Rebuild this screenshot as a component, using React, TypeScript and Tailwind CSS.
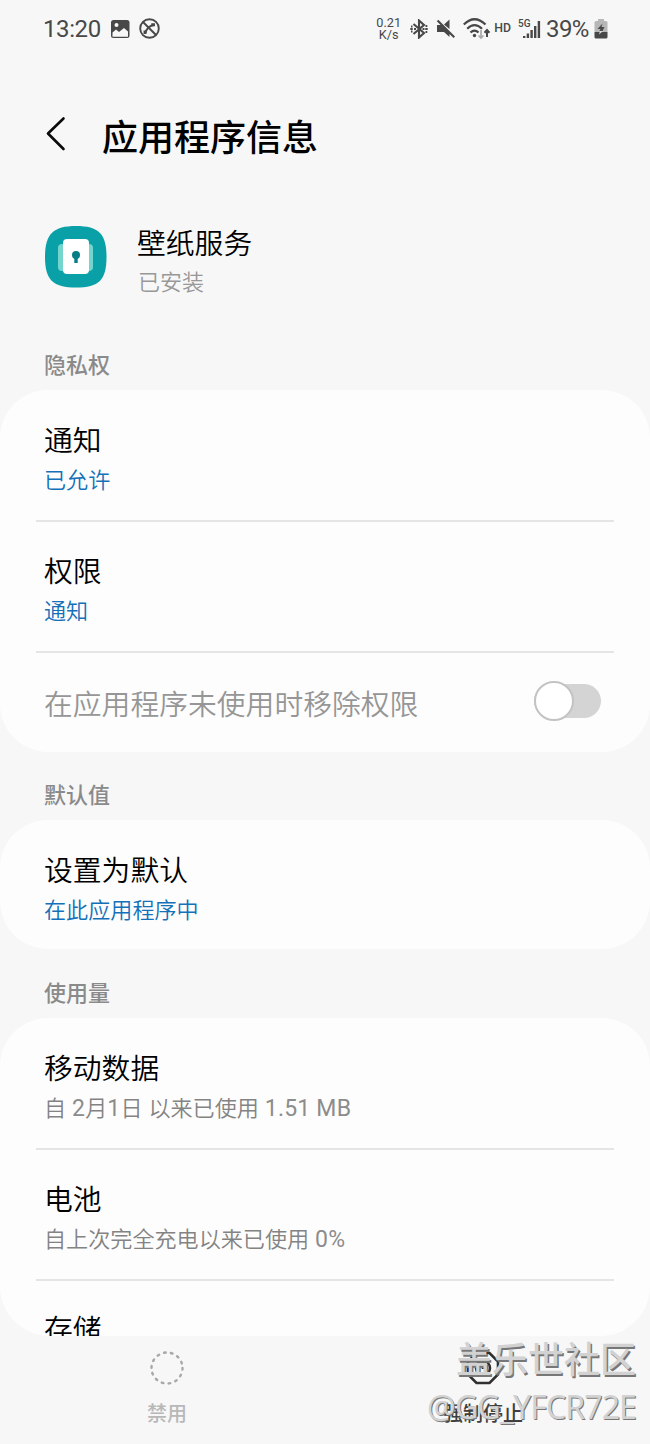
import React from 'react';

function Row({ title, sub, tone = 'gray', divider = false }: { title: string; sub: React.ReactNode; tone?: 'gray' | 'blue'; divider?: boolean }) {
  return (
    <div className="relative h-[130.5px] px-[44px] pt-[31px]">
      <div className="h-10 text-[28.8px] leading-10 text-black">{title}</div>
      <div className={`mt-[4px] h-[30px] text-[22.1px] leading-[30px] ${tone === 'blue' ? 'text-[#1470b8]' : 'text-[#838383]'}`}>{sub}</div>
      {divider && <div className="absolute -bottom-[1.5px] left-9 right-9 h-[2px] bg-[#e5e5e5]" />}
    </div>
  );
}

function Section({ label }: { label: string }) {
  return <h2 className="h-[30px] pl-[44px] pt-px text-[22px] font-medium leading-[30px] text-[#8a8a8a]">{label}</h2>;
}

function Latin({ children }: { children: React.ReactNode }) {
  return <span className="text-[23px] font-normal leading-none tracking-[0.2px] text-[#8c8c8c]">{children}</span>;
}

function StatusBar() {
  return (
    <div className="flex h-[57px] items-center pl-[43px] pr-[42px] text-[#484848]">
      <span className="w-[67px] text-[24px] font-normal leading-none tracking-[-0.4px]">13:20</span>
      <svg className="h-5 w-5" viewBox="0 0 20 20">
        <rect x="1" y="1" width="18.500" height="18" rx="2.5" fill="#484848" />
        <circle cx="6.500" cy="6" r="2" fill="#f7f7f7" />
        <path d="M2.500 13.500 6 10.500l3 2.500 5-4 4 3.500v4.700q0 .500-.500.500H3q-.500 0-.500-.500z" fill="#f7f7f7" />
      </svg>
      <svg className="ml-[9px] h-[21px] w-[21px]" viewBox="0 0 21 21" fill="none" stroke="#484848">
        <circle cx="10.5" cy="10.5" r="9.3" strokeWidth="1.9" />
        <path d="M4 4 17 17" strokeWidth="2" />
        <path d="M6.500 15Q7 12 9.500 9.500Q12 7.200 15 7" strokeWidth="1.900" />
        <path d="M6 12.500v3.500M12.300 6.800h3.700" strokeWidth="2.900" />
      </svg>
      <div className="ml-auto flex items-center">
        <div className="w-[27px] text-center text-[12.7px] font-normal leading-[11.5px]">0.21<br />K/s</div>
        <svg className="ml-[8px] h-5 w-[18px]" viewBox="0 0 18 20" fill="none" stroke="#484848" strokeWidth="2.1">
          <path d="m3.500 5 10.500 9-5 4.500v-17L14 6 3.500 15" />
          <path d="M4 10H6M12.500 10h2" />
          <path d="M.3 10h2.400M15.300 10h2.400M15.500 7h1.800M15.500 13h1.800M1 7.500h1.500M1 12.500h1.500" strokeWidth="1.800" />
        </svg>
        <svg className="ml-[8px] h-5 w-5" viewBox="0 0 20 20" fill="#484848">
          <path d="M1 6h4.500l8 8v4l-5.500-5H1zM8 5.500l5.500-5v9.500zM2.300.700l16.700 16.700-1.500 1.500L.800 2.200z" />
        </svg>
        <svg className="ml-[7px] h-[22px] w-[28px]" viewBox="0 0 28 22" fill="none" stroke="#484848" strokeWidth="2.200">
          <path d="M.800 6.500Q11.500-4 22.500 6.500M4.200 10.700Q11.500 3.500 19 10.700M7.500 14.500Q11.500 10.500 15.500 14.500" />
          <circle cx="11.500" cy="17.500" r="1.700" fill="#484848" stroke="none" />
          <path d="M18 12v8m-2.500-2.500L18 20l2.500-2.500" stroke="#aaa" strokeWidth="1.700" />
          <path d="M24 19v-7m-2.500 2.700L24 12l2.500 2.700" strokeWidth="2" />
        </svg>
        <span className="ml-[3px] text-[12.3px] font-medium leading-none">HD</span>
        <svg className="ml-[7px] h-[22px] w-[24px]" viewBox="0 0 24 22">
          <text x="0" y="9" className="font-['Roboto'] text-[10px] font-medium" fill="#484848">5G</text>
          <g fill="#484848">
            <rect x="5" y="18" width="2.400" height="2" />
            <rect x="8.700" y="15.500" width="2.400" height="4.500" />
            <rect x="12.400" y="12" width="2.400" height="8" />
            <rect x="16" y="8" width="2.400" height="12" />
            <rect x="19.700" y="3" width="2.400" height="17" />
          </g>
        </svg>
        <span className="ml-[4px] w-[46px] whitespace-nowrap text-[24px] font-normal leading-none tracking-[-0.600px]">39%</span>
        <svg className="ml-[2px] h-5 w-[14px]" viewBox="0 0 14 20">
          <path d="M4 0h6v2h2q1.500 0 1.500 1.500V13H.500V3.500Q.500 2 2 2h2z" fill="#b7b7b7" />
          <path d="M.500 13h13v5q0 1.500-1.500 1.500H2Q.500 19.500.500 18z" fill="#484848" />
          <path d="m8.500 4.500-5 5.500h3l-1 2h3l2-4h-3z" fill="#484848" />
          <path d="m6 12-1 3.500L9 12z" fill="#ddd" />
        </svg>
      </div>
    </div>
  );
}

export default function App() {
  return (
    <div className="relative flex h-[1444px] w-[650px] flex-col overflow-hidden bg-[#f7f7f7] font-['Roboto','Noto_Sans_CJK_SC',sans-serif] font-[350]">
      <StatusBar />
      <header className="flex h-[158px] items-center">
        <svg className="-mt-[4px] ml-[45px] h-9 w-[22px]" viewBox="0 0 22 36" fill="none" stroke="#0a0a0a" strokeWidth="2.600" strokeLinecap="round" strokeLinejoin="round">
          <path d="M18.500 2.500 3 17.500l15.500 15.500" />
        </svg>
        <h1 className="ml-[35px] mt-[5px] text-[36px] font-medium leading-[48px] text-black">应用程序信息</h1>
      </header>
      <div className="flex h-[135px] pl-[45px] pt-[11px]">
        <svg className="h-[62px] w-[62px]" viewBox="0 0 62 62">
          <path d="M31 0C54 0 61.500 8 61.500 31S54 61.500 31 61.500 0 54 0 31 8 0 31 0Z" fill="#09a1a7" />
          <rect x="13" y="18" width="35" height="27" rx="4" fill="#73d5cd" />
          <rect x="18" y="13" width="26" height="35" rx="4" fill="#fff" />
          <circle cx="31" cy="29" r="4" fill="#087d86" />
          <path d="M29.300 29h3.400v8h-3.400z" fill="#087d86" />
        </svg>
        <div className="ml-[30px] -mt-[2px]">
          <div className="h-10 text-[28.8px] leading-10 text-black">壁纸服务</div>
          <div className="ml-px text-[22px] leading-[38px] text-[#989898]">已安装</div>
        </div>
      </div>
      <main className="h-[986px] overflow-hidden rounded-b-[50px]">
        <Section label="隐私权" />
        <section className="mt-[10px] h-[362px] rounded-[48px] bg-[#fdfdfd]">
          <Row title="通知" sub="已允许" tone="blue" divider />
          <Row title="权限" sub="通知" tone="blue" divider />
          <div className="flex h-[100px] items-center justify-between pl-[44px] pr-[49px] text-[28.8px] text-[#969696]">
            <span className="mt-[8px] leading-10">在应用程序未使用时移除权限</span>
            <span className="flex h-[34px] w-[67px] items-center rounded-full bg-[#d4d4d4]">
              <span className="h-10 w-10 shrink-0 rounded-full border-2 border-[#c3c3c3] bg-white" />
            </span>
          </div>
        </section>
        <div className="mt-[28px]"><Section label="默认值" /></div>
        <section className="mt-[10px] h-[129px] rounded-[48px] bg-[#fdfdfd]">
          <Row title="设置为默认" sub="在此应用程序中" tone="blue" />
        </section>
        <div className="mt-[29px]"><Section label="使用量" /></div>
        <section className="mt-[10px] h-[400px] rounded-t-[48px] bg-[#fdfdfd]">
          <Row title="移动数据" sub={<>自<Latin> 2</Latin>月<Latin>1</Latin>日<Latin> </Latin>以来已使用<Latin> 1.51 MB</Latin></>} divider />
          <Row title="电池" sub={<>自上次完全充电以来已使用<Latin> 0%</Latin></>} divider />
          <Row title="存储" sub="" />
        </section>
      </main>
      <nav className="flex h-[108px] px-[9px] pt-[14px] text-[20px] font-medium">
        <div className="flex flex-1 flex-col items-center text-[#b8b8b8]">
          <svg className="h-9 w-9" viewBox="0 0 36 36" fill="none">
            <circle cx="18" cy="18" r="15.500" stroke="#a8a8a8" strokeWidth="2.400" strokeDasharray="1.700 5.256" strokeLinecap="round" />
          </svg>
          <span className="mt-[14px] leading-[28px]">禁用</span>
        </div>
        <div className="flex flex-1 flex-col items-center text-[#3f3f3f]">
          <svg className="h-9 w-9" viewBox="0 0 36 36" fill="none" stroke="#303030" strokeWidth="2.600">
            <path d="M11.500 3h13L33 11.500v13L24.500 33h-13L3 24.500v-13z" />
            <circle cx="18" cy="18" r="7" />
            <path d="M18 12v7" />
          </svg>
          <span className="mt-[14px] leading-[28px]">强制停止</span>
        </div>
      </nav>
      <div className="absolute right-[14px] top-[1336px] text-right text-[#d2d2d2]">
        <div className="whitespace-nowrap text-[36px] font-medium leading-[50px] [text-shadow:1.5px_1.5px_0_#777]">盖乐世社区</div>
        <div className="-mt-[4px] whitespace-nowrap font-['Noto_Sans'] text-[32px] font-normal leading-[50px] tracking-[-0.9px] [text-shadow:1px_1px_0_#777]">@GG_YFCR72E</div>
      </div>
    </div>
  );
}
